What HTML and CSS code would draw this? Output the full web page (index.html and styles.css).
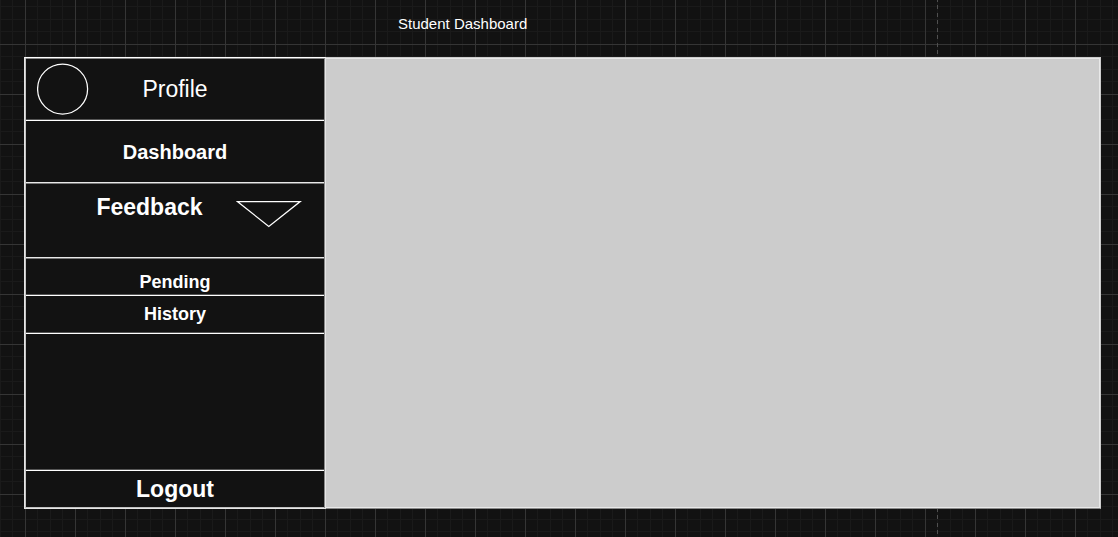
FILE: index.html
```html
<!DOCTYPE html>
<html lang="en">
<head>
<meta charset="utf-8">
<meta name="viewport" content="width=device-width, initial-scale=1">
<title>Student Dashboard</title>
<link rel="stylesheet" href="styles.css">
</head>
<body>
<div class="canvas">
  <div class="page-break"></div>
  <h1 class="title">Student Dashboard</h1>
  <div class="frame">
    <nav class="sidebar">
      <a class="row row-profile" href="#profile">
        <svg class="avatar" width="52" height="52" viewBox="0 0 52 52" aria-hidden="true"><circle cx="25.6" cy="26" r="25" fill="none" stroke="#fff" stroke-width="1.25"/></svg>
        <span>Profile</span>
      </a>
      <a class="row row-dashboard row-soft" href="#dashboard">Dashboard</a>
      <button class="row row-feedback row-soft" type="button">
        <span class="feedback-label">Feedback</span>
        <svg class="arrow" width="66" height="28" viewBox="0 0 66 28" aria-hidden="true"><path d="M1.4 1.5H64.2L32.8 26.5Z" fill="none" stroke="#fff" stroke-width="1.25"/></svg>
      </button>
      <a class="row row-pending" href="#pending">Pending</a>
      <a class="row row-history" href="#history">History</a>
      <div class="row row-spacer"></div>
      <a class="row row-logout" href="#logout">Logout</a>
    </nav>
    <main class="content"></main>
  </div>
</div>
</body>
</html>
```
FILE: styles.css
```css
* {
  box-sizing: border-box;
}

body {
  margin: 0;
  background: #121212;
  color: #fff;
  font-family: "Liberation Sans", Arial, sans-serif;
}

/* Editor grid: one strong line every 50px, three faint lines between */
.canvas {
  position: relative;
  display: flex;
  flex-direction: column;
  min-height: 100vh;
  padding: 0 17px 28px 24px;
  background-image:
    linear-gradient(90deg, #353535 1px, transparent 1px),
    linear-gradient(#353535 1px, transparent 1px),
    linear-gradient(90deg, transparent 12px, #1a1a1a 12px, #1a1a1a 13px, transparent 13px, transparent 25px, #1a1a1a 25px, #1a1a1a 26px, transparent 26px, transparent 37px, #1a1a1a 37px, #1a1a1a 38px, transparent 38px),
    linear-gradient(transparent 12px, #1a1a1a 12px, #1a1a1a 13px, transparent 13px, transparent 25px, #1a1a1a 25px, #1a1a1a 26px, transparent 26px, transparent 37px, #1a1a1a 37px, #1a1a1a 38px, transparent 38px);
  background-size: 50px 50px;
  background-position: 25px 44px;
}

/* Dashed page boundary lying over the grid */
.page-break {
  position: absolute;
  top: 0;
  bottom: 0;
  right: 180px;
  width: 1px;
  background: repeating-linear-gradient(#505050 0 2px, transparent 2px 5px, #505050 5px 9px, transparent 9px 13px, #505050 13px 15px);
}

.title {
  margin: 0;
  height: 57px;
  padding: 15px 0 0 374px;
  font-size: 15px;
  font-weight: 400;
  line-height: 18px;
}

.frame {
  position: relative;
  display: flex;
  flex: 1;
}

.sidebar {
  display: flex;
  flex-direction: column;
  width: 302px;
  flex-shrink: 0;
  border: 1px solid #e6e6e6;
  border-top-color: #fff;
  background: #121212;
  box-shadow: inset 1px 0 #c4c4c4, inset -1px 0 #888, inset 0 1px #888, inset 0 -1px #c0c0c0;
  padding: 1px;
}

.row {
  display: flex;
  align-items: center;
  justify-content: center;
  width: 100%;
  padding: 0;
  border: 0;
  border-bottom: 1px solid #fff;
  box-shadow: inset 0 -1px #555;
  background: none;
  color: #fff;
  font-family: inherit;
  font-weight: 700;
  text-decoration: none;
}

.row-soft {
  border-bottom-color: #777;
  box-shadow: inset 0 -1px #e8e8e8;
}

.row-profile {
  position: relative;
  height: 62px;
  font-size: 23px;
  font-weight: 400;
}

.avatar {
  position: absolute;
  left: 11px;
  top: 4px;
}

.row-dashboard {
  height: 63px;
  font-size: 20px;
}

.row-feedback {
  height: 75px;
  align-items: flex-start;
  justify-content: flex-start;
  padding-top: 10px;
  font-size: 23px;
}

.feedback-label {
  width: 210px;
  padding-left: 37px;
  line-height: 26px;
  text-align: center;
}

.arrow {
  margin-top: 6px;
}

.row-pending {
  height: 37px;
  padding-top: 10px;
  font-size: 18px;
}

.row-history {
  height: 38px;
  font-size: 18px;
}

.row-spacer {
  flex: 1;
}

.row-logout {
  height: 36px;
  border-bottom: 0;
  box-shadow: none;
  font-size: 23px;
}

.content {
  flex: 1;
  border: 1px solid #ccc;
  border-left: 0;
  border-bottom-color: #888;
  background: #ccc;
  box-shadow: inset 0 1px #e8e8e8, inset 0 -1px #e8e8e8, inset -1px 0 #e8e8e8;
}
```
